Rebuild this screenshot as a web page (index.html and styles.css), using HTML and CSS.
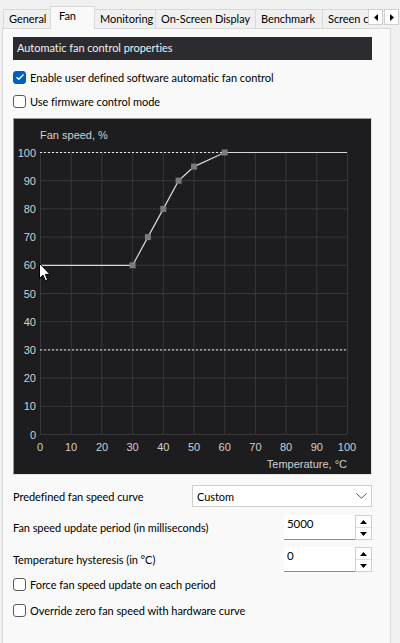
FILE: index.html
```html
<!DOCTYPE html>
<html>
<head>
<meta charset="utf-8">
<link rel="stylesheet" href="styles.css">
</head>
<body>
<div class="tabbar">
  <div class="tab t-general">General</div>
  <div class="tab active">Fan</div>
  <div class="tab t-mon">Monitoring</div>
  <div class="tab t-osd">On-Screen Display</div>
  <div class="tab t-bench">Benchmark</div>
  <div class="tab t-screen">Screen c</div>
  <div class="arrows">
    <div class="arr"><svg width="6" height="7" viewBox="0 0 6 7"><path d="M5 0L1 3.5L5 7Z" fill="#000"/></svg></div>
    <div class="arr"><svg width="6" height="7" viewBox="0 0 6 7"><path d="M1 0L5 3.5L1 7Z" fill="#000"/></svg></div>
  </div>
</div>
<div class="panel">
  <div class="header">Automatic fan control properties</div>
  <label class="check"><span class="box checked"><svg width="10" height="8" viewBox="0 0 10 8"><path d="M1.5 4.2L3.8 6.3L8.5 1.5" fill="none" stroke="#fff" stroke-width="1.4"/></svg></span>Enable user defined software automatic fan control</label>
  <label class="check"><span class="box"></span>Use firmware control mode</label>
  <div class="chart">
    <svg width="357" height="355" viewBox="0 0 357 355" class="plot">
      <g stroke="#38383b" stroke-width="1">
        <path d="M26.5 33V315M57.2 33V315M87.9 33V315M118.6 33V315M149.3 33V315M180 33V315M210.7 33V315M241.4 33V315M272.1 33V315M302.8 33V315M333.5 33V315"/>
        <path d="M26 33.5H333M26 61.7H333M26 89.9H333M26 118.1H333M26 146.3H333M26 174.5H333M26 202.7H333M26 230.9H333M26 259.1H333M26 287.3H333M26 315.5H333"/>
      </g>
      <path d="M26 33.5H333M26 230.9H333" stroke="#e6e6e6" stroke-width="1" stroke-dasharray="2 2"/>
      <polyline points="26,146.3 118.6,146.3 133.9,118.1 149.3,89.9 164.6,61.7 180,47.6 210.7,33.5 333,33.5" fill="none" stroke="#d8d8d8" stroke-width="1.2"/>
      <g fill="#7b7b7d">
        <rect x="115.6" y="143.3" width="6" height="6"/>
        <rect x="130.9" y="115.1" width="6" height="6"/>
        <rect x="146.3" y="86.9" width="6" height="6"/>
        <rect x="161.6" y="58.7" width="6" height="6"/>
        <rect x="177" y="44.6" width="6" height="6"/>
        <rect x="207.7" y="30.5" width="6" height="6"/>
      </g>
      <g class="lbl" text-anchor="end">
        <text x="22" y="37.5">100</text>
        <text x="22" y="65.7">90</text>
        <text x="22" y="93.9">80</text>
        <text x="22" y="122.1">70</text>
        <text x="22" y="150.3">60</text>
        <text x="22" y="178.5">50</text>
        <text x="22" y="206.7">40</text>
        <text x="22" y="234.9">30</text>
        <text x="22" y="263.1">20</text>
        <text x="22" y="291.3">10</text>
        <text x="22" y="319.5">0</text>
      </g>
      <g class="lbl" text-anchor="middle">
        <text x="26" y="332">0</text>
        <text x="57" y="332">10</text>
        <text x="88" y="332">20</text>
        <text x="118.6" y="332">30</text>
        <text x="149.3" y="332">40</text>
        <text x="180" y="332">50</text>
        <text x="210.7" y="332">60</text>
        <text x="241.4" y="332">70</text>
        <text x="272.1" y="332">80</text>
        <text x="302.8" y="332">90</text>
        <text x="333" y="332">100</text>
      </g>
      <text class="lbl" x="26" y="20">Fan speed, %</text>
      <text class="lbl" x="333" y="349" text-anchor="end">Temperature, °C</text>
    </svg>
    <svg class="cursor" width="12" height="19" viewBox="0 0 12 19"><path d="M0.5 0.5V15.5L4 12.2L6.4 17.8L8.6 16.8L6.3 11.4H11Z" fill="#fff" stroke="#000" stroke-width="1"/></svg>
  </div>
  <div class="row first-row">
    <span class="rlabel">Predefined fan speed curve</span>
    <div class="select"><span>Custom</span><svg width="11" height="6" viewBox="0 0 11 6"><path d="M0.5 0.5L5.5 5.2L10.5 0.5" fill="none" stroke="#555" stroke-width="1"/></svg></div>
  </div>
  <div class="row spinrow">
    <span class="rlabel">Fan speed update period (in milliseconds)</span>
    <div class="spin"><div class="field">5000</div><div class="btns"><div class="sb"><svg width="7" height="4" viewBox="0 0 7 4"><path d="M0 4L3.5 0L7 4Z" fill="#000"/></svg></div><div class="sb"><svg width="7" height="4" viewBox="0 0 7 4"><path d="M0 0L3.5 4L7 0Z" fill="#000"/></svg></div></div></div>
  </div>
  <div class="row spinrow">
    <span class="rlabel">Temperature hysteresis (in °C)</span>
    <div class="spin"><div class="field">0</div><div class="btns"><div class="sb"><svg width="7" height="4" viewBox="0 0 7 4"><path d="M0 4L3.5 0L7 4Z" fill="#000"/></svg></div><div class="sb"><svg width="7" height="4" viewBox="0 0 7 4"><path d="M0 0L3.5 4L7 0Z" fill="#000"/></svg></div></div></div>
  </div>
  <label class="check low"><span class="box"></span>Force fan speed update on each period</label>
  <label class="check low"><span class="box"></span>Override zero fan speed with hardware curve</label>
</div>
</body>
</html>
```
FILE: styles.css
```css
html, body {
  margin: 0;
  padding: 0;
}
body {
  width: 400px;
  height: 643px;
  overflow: hidden;
  background: #f0f0f0;
  font-family: Lato, "Liberation Sans", sans-serif;
  font-size: 11px;
  letter-spacing: -0.05px;
  color: #000;
}
.tabbar {
  display: flex;
  align-items: flex-end;
  height: 28px;
  padding-left: 3px;
  position: relative;
}
.tab {
  flex: none;
  height: 19px;
  line-height: 18px;
  padding-left: 5px;
  border: 1px solid #d9d9d9;
  border-bottom: none;
  border-right: none;
  background: #f0f0f0;
  white-space: nowrap;
  overflow: hidden;
  box-sizing: border-box;
  font-size: 11px;
}
.t-general { width: 47px; }
.t-mon { width: 60px; }
.t-osd { width: 100px; }
.t-bench { width: 67px; }
.t-screen { width: 46px; }
.tab.active {
  width: 45px;
  line-height: 17px;
  background: #f9f9f9;
  border-right: 1px solid #d9d9d9;
  margin-bottom: -1px;
  height: 23px;
  padding-left: 8px;
  position: relative;
  z-index: 2;
}
.tab.active + .tab { border-left: none; }
.arrows {
  position: absolute;
  right: 1px;
  top: 9px;
  display: flex;
  gap: 1px;
}
.arr {
  width: 15px;
  height: 16px;
  background: #fff;
  border: 1px solid #cfcfcf;
  box-sizing: border-box;
  display: flex;
  align-items: center;
  justify-content: center;
}
.panel {
  margin-left: 2px;
  width: 389px;
  height: 615px;
  box-sizing: border-box;
  background: #f9f9f9;
  border: 1px solid #d9d9d9;
  border-bottom: none;
  padding: 8px 0 0 10px;
}
.header {
  width: 359px;
  height: 23px;
  background: #2c2c30;
  color: #f0f0f0;
  line-height: 22px;
  padding-left: 4px;
  box-sizing: border-box;
  font-size: 11px;
}
.check {
  display: flex;
  align-items: center;
  height: 16px;
  margin-top: 9px;
  white-space: nowrap;
}
.check + .check { margin-top: 8px; }
.box {
  width: 13px;
  height: 13px;
  border: 1px solid #5a5a5a;
  border-radius: 3px;
  box-sizing: border-box;
  margin-right: 4px;
  background: #fff;
  display: flex;
  align-items: center;
  justify-content: center;
  flex: none;
}
.box.checked {
  background: #005fb8;
  border-color: #005fb8;
}
.chart {
  position: relative;
  margin-top: 9px;
  width: 359px;
  height: 357px;
  box-sizing: border-box;
  background: #1d1d1f;
  border-top: 1px solid #9a9a9a;
  border-left: 1px solid #9a9a9a;
  border-right: 1px solid #e3e3e3;
  border-bottom: 1px solid #e3e3e3;
}
.plot { display: block; }
.lbl {
  font-family: "Liberation Sans", Arial, sans-serif;
  font-size: 11px;
  letter-spacing: 0;
  fill: #d0d0d0;
}
.cursor {
  position: absolute;
  left: 25px;
  top: 144px;
}
.row {
  display: flex;
  align-items: center;
  justify-content: space-between;
  width: 359px;
}
.first-row { margin-top: 10px; }
.select {
  width: 180px;
  height: 22px;
  box-sizing: border-box;
  border: 1px solid #cfcfcf;
  background: #fff;
  display: flex;
  align-items: center;
  justify-content: space-between;
  padding: 0 4px 0 4px;
}
.rlabel { white-space: nowrap; }
.spinrow { margin-top: 8px; align-items: flex-start; }
.spinrow .rlabel { margin-top: 6px; }
.spinrow + .spinrow { margin-top: 7px; }
.spin {
  display: flex;
  width: 88px;
  height: 25px;
}
.field {
  width: 71px;
  height: 25px;
  box-sizing: border-box;
  background: #fff;
  border-bottom: 1px solid #8a8a8a;
  padding: 2px 0 0 3px;
  font-size: 11.5px;
}
.btns {
  width: 17px;
  display: flex;
  flex-direction: column;
  border: 1px solid #cfcfcf;
  box-sizing: border-box;
  background: #fff;
}
.sb {
  flex: 1;
  display: flex;
  align-items: center;
  justify-content: center;
}
.sb + .sb { border-top: 1px solid #e0e0e0; }
.check.low { margin-top: 4px; }
.check.low + .check.low { margin-top: 10px; }
```
